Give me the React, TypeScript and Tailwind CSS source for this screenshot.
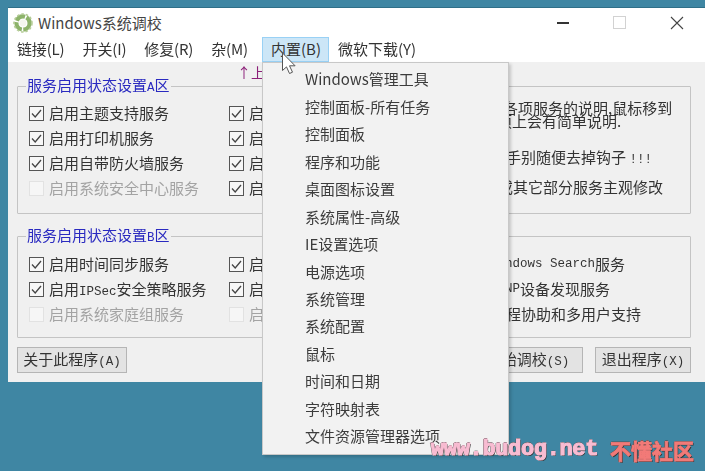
const cjk = "font-['Noto_Sans_CJK_SC','Noto_Sans',sans-serif]";

const menuBar = ["链接(L)", "开关(I)", "修复(R)", "杂(M)"];

const builtinItems = [
  "Windows管理工具",
  "控制面板-所有任务",
  "控制面板",
  "程序和功能",
  "桌面图标设置",
  "系统属性-高级",
  "IE设置选项",
  "电源选项",
  "系统管理",
  "系统配置",
  "鼠标",
  "时间和日期",
  "字符映射表",
  "文件资源管理器选项",
];

function Check({ label, disabled }: { label: React.ReactNode; disabled?: boolean }) {
  return (
    <div className={`flex h-[25px] items-center gap-[5px] ${disabled ? "text-[#a3a3a3]" : "text-[#333]"}`}>
      <span
        className={`flex h-[15px] w-[15px] shrink-0 items-center justify-center border ${
          disabled ? "border-[#e2e2e2] bg-[#f6f6f6]" : "border-[#555] bg-[#f7f7f7]"
        }`}
      >
        {!disabled && (
          <svg viewBox="0 0 13 13" className="h-[13px] w-[13px]" fill="none" stroke="#444" strokeWidth="1.3">
            <path d="M2 6.5 5.2 10 11 3" />
          </svg>
        )}
      </span>
      <span className="whitespace-nowrap">{label}</span>
    </div>
  );
}

function Mono({ children }: { children: React.ReactNode }) {
  return <span className="font-['Liberation_Mono',monospace] text-[12.5px]">{children}</span>;
}

function Group({ title, children }: { title: React.ReactNode; children: React.ReactNode }) {
  return (
    <fieldset className="rounded-[1px] border border-[#c4c4c4] pl-[11px]">
      <legend className="-ml-[3px] px-[1px] text-[15px] leading-[18px] text-[#2a2ac0]">{title}</legend>
      {children}
    </fieldset>
  );
}

function Btn({ children, className }: { children: React.ReactNode; className?: string }) {
  return (
    <button className={`h-[26px] border border-[#b5b5b5] bg-[#e3e3e3] text-[15px] text-[#333] ${className ?? ""}`}>
      {children}
    </button>
  );
}

function AppIcon() {
  return (
    <svg viewBox="0 0 20 20" className="h-[20px] w-[20px]">
      <circle cx="10" cy="10" r="6.6" fill="none" stroke="#8db36a" strokeWidth="4.2" strokeDasharray="10 1.5" />
      <circle cx="10" cy="10" r="9" fill="none" stroke="#b5cc98" strokeWidth="1.6" strokeDasharray="2.5 2" />
      <circle cx="10" cy="10" r="3.4" fill="#f4f6ee" />
    </svg>
  );
}

export default function App() {
  return (
    <div className={`relative h-[471px] w-[705px] overflow-hidden bg-[#3f86a3] pl-[8px] pt-[8px] text-[15px] ${cjk}`}>
      <div className="w-[697px] bg-[#f0f0f0] shadow-[0_-1px_0_#2f6f88] blur-[0.35px]">
        <div className="bg-white">
          <div className="flex h-[29px] items-center pl-[5px] text-[#444]">
            <AppIcon />
            <span className="ml-[5px] mt-[1px]">Windows系统调校</span>
            <div className="ml-auto flex items-center">
              <span className="mr-[44px] h-[2px] w-[12px] bg-[#333]" />
              <span className="mr-[44px] h-[13px] w-[13px] border border-[#d2d2d2]" />
              <svg viewBox="0 0 14 14" className="mr-[21px] h-[14px] w-[14px]" stroke="#444" strokeWidth="1.1">
                <path d="M1 1 13 13M13 1 1 13" />
              </svg>
            </div>
          </div>
          <nav className="flex h-[25px] text-[#333]">
            {menuBar.map((m) => (
              <span key={m} className="flex items-center px-[9px] tracking-[-0.15px]">{m}</span>
            ))}
            <div className="relative ml-[5px] flex items-center border border-[#99d1f5] bg-[#cce6f7] pl-[8px] pr-[7px]">
              内置(B)
              <div className="absolute left-[-1px] top-[24px] z-10 w-[247px] border border-[#c8c8c8] bg-[#f2f2f2] pb-[4px] pl-[42px] pt-[3px] shadow-[2px_2px_3px_rgba(0,0,0,0.18)]">
                {builtinItems.map((item) => (
                  <div key={item} className="flex h-[27.45px] items-center whitespace-nowrap text-[#3c3c3c]">{item}</div>
                ))}
              </div>
            </div>
            <span className="flex items-center px-[9px]">微软下载(Y)</span>
          </nav>
        </div>

        <div className="px-[9px] pb-[9px] pr-[14px]">
          <div className="relative h-[14px]">
            <span className="absolute left-[220px] top-[1px] text-[14px] leading-[18px] text-[#8c1f78]">↑上</span>
          </div>

          <Group title={<>服务启用状态设置<Mono>A</Mono>区</>}>
            <div className="flex pb-[12px] pt-[4px]">
              <div className="w-[200px]">
                <Check label="启用主题支持服务" />
                <Check label="启用打印机服务" />
                <Check label="启用自带防火墙服务" />
                <Check label="启用系统安全中心服务" disabled />
              </div>
              <div className="w-[250px]">
                <Check label="启用" />
                <Check label="启用" />
                <Check label="启用" />
                <Check label="启用" />
              </div>
              <div className="text-[#333]">
                <div className="ml-[24px] h-[13px] whitespace-nowrap leading-[13px]">各项服务的说明,鼠标移到</div>
                <div className="ml-[18px] h-[30px] whitespace-nowrap leading-[13px]">项上会有简单说明.</div>
                <div className="ml-[27px] h-[30px] whitespace-nowrap leading-[25px]">手别随便去掉钩子 <Mono>!!!</Mono></div>
                <div className="ml-[19px] h-[25px] whitespace-nowrap leading-[25px]">或其它部分服务主观修改</div>
              </div>
            </div>
          </Group>

          <div className="h-[12px]" />

          <Group title={<>服务启用状态设置<Mono>B</Mono>区</>}>
            <div className="flex pb-[10px] pt-[5px]">
              <div className="w-[200px]">
                <Check label="启用时间同步服务" />
                <Check label={<>启用<Mono>IPSec</Mono>安全策略服务</>} />
                <Check label="启用系统家庭组服务" disabled />
              </div>
              <div className="w-[250px]">
                <Check label="启用" />
                <Check label="启用" />
                <Check label="启用" disabled />
              </div>
              <div className="text-[#333]">
                <div className="flex h-[25px] items-center whitespace-nowrap pl-[11px]"><Mono>Windows Search</Mono>服务</div>
                <div className="flex h-[25px] items-center whitespace-nowrap pl-[11px]"><Mono>UPNP</Mono>设备发现服务</div>
                <div className="flex h-[25px] items-center whitespace-nowrap pl-[12px]">远程协助和多用户支持</div>
              </div>
            </div>
          </Group>

          <div className="mt-[9px] flex">
            <Btn className="w-[110px]">关于此程序<Mono>(A)</Mono></Btn>
            <Btn className="ml-auto w-[110px]">开始调校<Mono>(S)</Mono></Btn>
            <Btn className="ml-[12px] w-[96px]">退出程序<Mono>(X)</Mono></Btn>
          </div>
        </div>
      </div>

      {/* mouse pointer over the menu */}
      <svg viewBox="0 0 16 24" className="absolute left-[281px] top-[52px] z-20 h-[24px] w-[16px]">
        <path d="M1.5 1v17.5l4-3.6 3 6.6 3-1.3-3-6.4h5.6z" fill="#fff" stroke="#555" strokeWidth="1" />
      </svg>

      {/* site watermark */}
      <div className="absolute left-[431px] top-[436px] z-30 flex items-center whitespace-nowrap font-bold leading-[28px] [text-shadow:1px_1px_0_#333,-1px_0_0_#555,0_-1px_0_#555]">
        <span className="font-['Liberation_Mono',monospace] text-[22px] tracking-[-0.35px] text-[#f8bcd2] [-webkit-text-stroke:1.2px_#f8bcd2]">www.budog.net</span>
        <span className="ml-[12px] text-[21px] text-[#f27a78] [-webkit-text-stroke:0.8px_#f27a78]">不懂社区</span>
      </div>
    </div>
  );
}
